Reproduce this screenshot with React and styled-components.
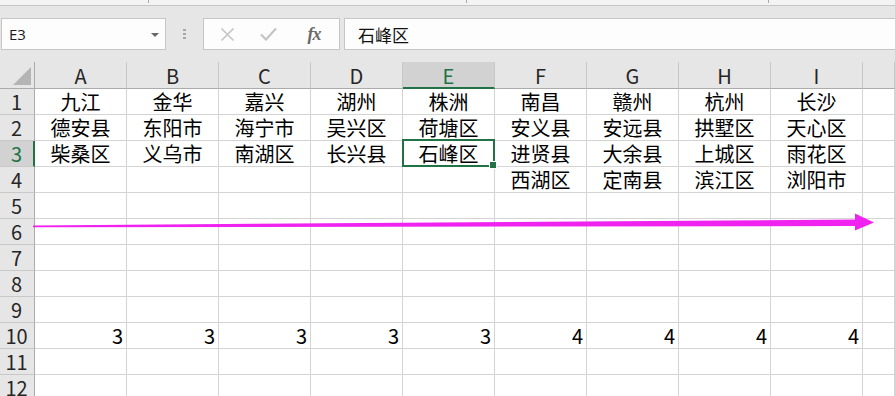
import React from 'react';
import styled, { createGlobalStyle } from 'styled-components';

const Global = createGlobalStyle`
  html, body { margin: 0; padding: 0; background: #e6e6e6; overflow: hidden; }
  body { font-family: "Noto Sans CJK SC", "Noto Sans", sans-serif; }
  * { box-sizing: border-box; }
`;

const Page = styled.div`
  position: relative;
  width: 895px;
  height: 396px;
  overflow: hidden;
  background: #e6e6e6;
`;

const TopStrip = styled.div`
  height: 6px;
  background: #f3f3f3;
  border-bottom: 1px solid #c6c6c6;
  display: grid;
  grid-template-columns: 148px 318px 302px 1fr;
`;

const Tick = styled.div`
  height: 3px;
  border-left: ${(p) => (p.$on ? '1px solid #a8a8a8' : 'none')};
`;

const FormulaRow = styled.div`
  display: flex;
  height: 56px;
  padding: 12px 0 12px 1px;
  align-items: stretch;
`;

const NameBox = styled.div`
  width: 165px;
  background: #fdfdfd;
  border: 1px solid #c6c6c6;
  display: flex;
  align-items: center;
  justify-content: space-between;
  padding: 0 6px 0 7px;
  font-family: "Open Sans", "Noto Sans", sans-serif;
  font-size: 15px;
  color: #1a1a1a;
`;

const Caret = styled.span`
  width: 0;
  height: 0;
  border-left: 4px solid transparent;
  border-right: 4px solid transparent;
  border-top: 4px solid #666;
  margin-top: 1px;
`;

const Grip = styled.div`
  width: 37px;
  display: flex;
  flex-direction: column;
  align-items: center;
  justify-content: center;
  gap: 2px;
  padding-right: 1px;
`;

const Dot = styled.span`
  width: 3px;
  height: 2px;
  background: #a6a6a6;
`;

const FxBox = styled.div`
  width: 137px;
  background: #fdfdfd;
  border: 1px solid #c6c6c6;
  display: flex;
  align-items: center;
  padding-left: 14px;
`;

const FxIcon = styled.span`
  width: ${(p) => p.$w}px;
  margin-left: ${(p) => p.$ml || 0}px;
  display: flex;
  justify-content: center;
  align-items: center;
`;

const FxText = styled.span`
  font-family: "Liberation Serif", "DejaVu Serif", serif;
  font-style: italic;
  font-weight: bold;
  font-size: 18px;
  color: #6a6a6a;
  letter-spacing: -1px;
`;

const FormulaInput = styled.div`
  flex: 1;
  margin-left: 4px;
  background: #fdfdfd;
  border: 1px solid #c6c6c6;
  border-right: none;
  display: flex;
  align-items: center;
  padding-left: 13px;
  font-size: 17px;
  color: #111;
`;

const Sheet = styled.div`
  display: grid;
  grid-template-columns: 35px repeat(9, 92px) 1fr;
  grid-template-rows: 27px repeat(12, 26px);
  background: #fff;
`;

const Corner = styled.div`
  position: relative;
  background: #e6e6e6;
  border-right: 1px solid #ababab;
  border-bottom: 1px solid #ababab;
  &::after {
    content: '';
    position: absolute;
    right: 3px;
    bottom: 3px;
    width: 18px;
    height: 18px;
    background: #b4b4b4;
    clip-path: polygon(100% 0, 100% 100%, 0 100%);
  }
`;

const ColHead = styled.div`
  background: ${(p) => (p.$sel ? '#d2d2d2' : '#e6e6e6')};
  color: ${(p) => (p.$sel ? '#217346' : '#262626')};
  border-right: 1px solid #c8c8c8;
  border-bottom: ${(p) => (p.$sel ? '2px solid #217346' : '1px solid #ababab')};
  display: flex;
  align-items: center;
  justify-content: center;
  font-size: 20px;
  line-height: 20px;
  padding-top: ${(p) => (p.$sel ? '2px' : '1px')};
`;

const RowHead = styled.div`
  background: ${(p) => (p.$sel ? '#d2d2d2' : '#e6e6e6')};
  color: ${(p) => (p.$sel ? '#217346' : '#262626')};
  border-right: ${(p) => (p.$sel ? '2px solid #217346' : '1px solid #ababab')};
  border-bottom: 1px solid #c8c8c8;
  display: flex;
  align-items: center;
  justify-content: center;
  font-size: 20px;
  line-height: 20px;
  padding-right: ${(p) => (p.$sel ? '0' : '1px')};
`;

const Cell = styled.div`
  position: relative;
  border-right: 1px solid #d4d4d4;
  border-bottom: 1px solid #d4d4d4;
  display: flex;
  align-items: center;
  justify-content: ${(p) => (p.$num ? 'flex-end' : 'center')};
  padding-right: ${(p) => (p.$num ? '3px' : '0')};
  font-size: 20px;
  line-height: 20px;
  color: #000;
  ${(p) =>
    p.$sel &&
    `
    &::after {
      content: '';
      position: absolute;
      top: -2px;
      left: -1px;
      right: -1px;
      bottom: -1px;
      border: 2px solid #217346;
      pointer-events: none;
    }
    &::before {
      content: '';
      position: absolute;
      right: -3px;
      bottom: -3px;
      width: 6px;
      height: 6px;
      background: #217346;
      border: 1px solid #fff;
      z-index: 2;
    }
  `}
`;

const ArrowLayer = styled.svg`
  position: absolute;
  left: 0;
  top: 0;
  pointer-events: none;
`;

const COLS = ['A', 'B', 'C', 'D', 'E', 'F', 'G', 'H', 'I'];
const DATA = {
  1: ['九江', '金华', '嘉兴', '湖州', '株洲', '南昌', '赣州', '杭州', '长沙'],
  2: ['德安县', '东阳市', '海宁市', '吴兴区', '荷塘区', '安义县', '安远县', '拱墅区', '天心区'],
  3: ['柴桑区', '义乌市', '南湖区', '长兴县', '石峰区', '进贤县', '大余县', '上城区', '雨花区'],
  4: ['', '', '', '', '', '西湖区', '定南县', '滨江区', '浏阳市'],
  10: ['3', '3', '3', '3', '3', '4', '4', '4', '4'],
};

export default function App() {
  const rows = Array.from({ length: 12 }, (_, i) => i + 1);
  return (
    <Page>
      <Global />
      <TopStrip>
        <Tick />
        <Tick $on />
        <Tick $on />
        <Tick $on />
      </TopStrip>
      <FormulaRow>
        <NameBox>
          <span>E3</span>
          <Caret />
        </NameBox>
        <Grip>
          <Dot />
          <Dot />
          <Dot />
        </Grip>
        <FxBox>
          <FxIcon $w={18}>
            <svg width="15" height="15" viewBox="0 0 15 15">
              <path d="M1.5 1.5 L13.5 13.5 M13.5 1.5 L1.5 13.5" stroke="#c4c4c4" strokeWidth="1.6" fill="none" />
            </svg>
          </FxIcon>
          <FxIcon $w={28} $ml={18}>
            <svg width="17" height="14" viewBox="0 0 17 14">
              <path d="M1 7.5 L6 12.5 L16 1.5" stroke="#c4c4c4" strokeWidth="2.2" fill="none" />
            </svg>
          </FxIcon>
          <FxIcon $w={24} $ml={20}>
            <FxText>fx</FxText>
          </FxIcon>
        </FxBox>
        <FormulaInput>石峰区</FormulaInput>
      </FormulaRow>
      <Sheet>
        <Corner />
        {COLS.map((c) => (
          <ColHead key={c} $sel={c === 'E'}>{c}</ColHead>
        ))}
        <ColHead />
        {rows.map((r) => (
          <React.Fragment key={r}>
            <RowHead $sel={r === 3}>{r}</RowHead>
            {COLS.map((c, ci) => {
              const v = DATA[r] ? DATA[r][ci] : '';
              return (
                <Cell key={c} $num={r === 10} $sel={r === 3 && c === 'E'}>
                  {v}
                </Cell>
              );
            })}
            <Cell />
          </React.Fragment>
        ))}
      </Sheet>
      <ArrowLayer width="895" height="396" viewBox="0 0 895 396">
        <polygon points="33,225.4 857,219.6 857,226 33,227.2" fill="#ef22ef" />
        <polygon points="855,213.5 874,222.6 855,230.5" fill="#ef22ef" />
      </ArrowLayer>
    </Page>
  );
}
